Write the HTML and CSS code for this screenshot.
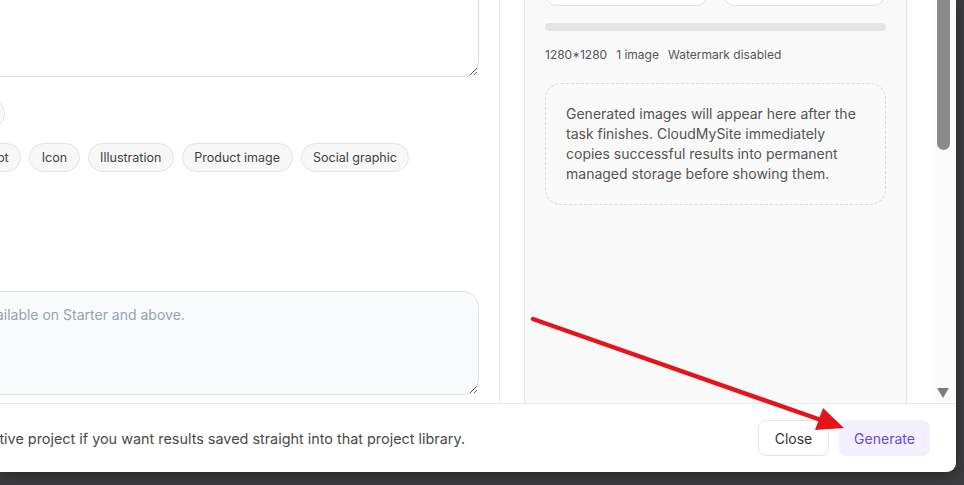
FILE: index.html
```html
<!DOCTYPE html>
<html lang="en">
  <head>
    <meta charset="UTF-8">
    <title>Generate image</title>
    <link rel="stylesheet" href="styles.css">
  </head>
  <body>
    <div class="modal">
      <div class="modal-body">
        <div class="form-col">
          <textarea class="prompt" aria-label="Prompt"></textarea>
          <div class="ratio-row">
            <button class="pill pill-cut">Custom</button>
          </div>
          <div class="chips">
            <button class="chip chip-cut">Concept</button>
            <button class="chip">Icon</button>
            <button class="chip">Illustration</button>
            <button class="chip">Product image</button>
            <button class="chip">Social graphic</button>
          </div>
          <textarea class="negative" placeholder="Negative prompts are available on Starter and above." disabled></textarea>
        </div>
        <div class="preview-col">
          <div class="panel">
            <div class="selects">
              <div class="select-box"></div>
              <div class="select-box"></div>
            </div>
            <div class="progress"></div>
            <div class="meta">
              <span>1280*1280</span>
              <span>1 image</span>
              <span>Watermark disabled</span>
            </div>
            <div class="empty">
              Generated images will appear here after the task finishes. CloudMySite immediately copies successful results into permanent managed storage before showing them.
            </div>
          </div>
        </div>
        <div class="scrollbar">
          <div class="thumb"></div>
          <div class="arrow-down"></div>
        </div>
      </div>
      <div class="modal-footer">
        <p class="hint">Select an active project if you want results saved straight into that project library.</p>
        <div class="actions">
          <button class="btn btn-close">Close</button>
          <button class="btn btn-primary">Generate</button>
        </div>
      </div>
    </div>

    <svg class="annotation" width="964" height="485" viewBox="0 0 964 485">
      <line x1="533" y1="319" x2="821" y2="420" stroke="#e5141b" stroke-width="4.5" stroke-linecap="round"/>
      <polygon points="844,428 815,430 823,408" fill="#e5141b"/>
    </svg>
  </body>
</html>
```

FILE: styles.css
```css
body {
  margin: 0;
  width: 964px;
  height: 485px;
  overflow: hidden;
  background: #3d3d40;
  font-family: Inter, "Liberation Sans", sans-serif;
  position: relative;
}

.modal {
  width: 956px;
  height: 472px;
  background: white;
  border-radius: 0 0 9px 0;
  box-shadow: 0 4px 14px rgba(0, 0, 0, 0.35);
  display: flex;
  flex-direction: column;
  overflow: hidden;
}

.modal-body {
  height: 403px;
  display: flex;
  overflow: hidden;
}

/* left column */
.form-col {
  width: 479px;
  padding-right: 20px;
  border-right: 1px solid #e8e8e8;
  display: flex;
  flex-direction: column;
  align-items: flex-start;
}

textarea {
  font-family: inherit;
  box-sizing: border-box;
  resize: vertical;
  outline: none;
}

.prompt {
  margin: -50px 0 0 -40px;
  width: calc(100% + 40px);
  height: 127px;
  border: 1px solid #dcdcdc;
  border-radius: 15px;
  background: white;
}

.ratio-row {
  margin-top: 21px;
}

.pill {
  height: 31px;
  width: 110px;
  margin-left: -105px;
  border: 1px solid #e2e2e2;
  border-radius: 16px;
  background: #fafafa;
}

.chips {
  margin-top: 14px;
  display: flex;
  gap: 8px;
}

.chip {
  height: 29px;
  padding: 0 11.5px;
  border: 1px solid #e3e3e3;
  border-radius: 15px;
  background: #f7f7f7;
  color: #424242;
  font-family: inherit;
  font-size: 12.5px;
}

.chip-cut {
  margin-left: -54px;
}

.negative {
  margin: 119px 0 0 -193px;
  width: calc(100% + 193px);
  height: 104px;
  padding: 14px 14px 14px 26px;
  border: 1px solid #dde1e6;
  border-radius: 16px;
  background: #f8fafc;
  font-size: 14px;
  line-height: 18px;
}

.negative::placeholder {
  color: #9aa2ae;
}

/* right column */
.preview-col {
  padding: 0 28px 0 24px;
}

.panel {
  display: flow-root;
  box-sizing: border-box;
  width: 383px;
  height: 100%;
  padding: 0 20px;
  background: #f9f9f9;
  border: 1px solid #e6e6e6;
  border-top: none;
  border-bottom: none;
}

.selects {
  display: flex;
  gap: 15px;
  margin-top: -34px;
}

.select-box {
  flex: 1;
  height: 40px;
  background: white;
  border: 1px solid #e2e2e2;
  border-radius: 12px;
  box-sizing: border-box;
}

.progress {
  margin-top: 17px;
  height: 8px;
  border-radius: 4px;
  background: #e5e5e5;
}

.meta {
  margin-top: 16px;
  display: flex;
  gap: 9px;
  font-size: 12px;
  line-height: 16px;
  color: #555;
}

.empty {
  margin-top: 20px;
  padding: 20px;
  border: 1px dashed #dcdcdc;
  border-radius: 16px;
  font-size: 14px;
  line-height: 20px;
  color: #555;
}

/* scrollbar */
.scrollbar {
  width: 21px;
  display: flex;
  flex-direction: column;
  justify-content: space-between;
  background: #fbfbfb;
}

.thumb {
  margin-left: 2px;
  width: 13px;
  height: 150px;
  background: #8b8b8b;
  border-radius: 0 0 7px 7px;
}

.arrow-down {
  margin: 0 0 5px 2px;
  width: 0;
  height: 0;
  border-left: 6.5px solid transparent;
  border-right: 6.5px solid transparent;
  border-top: 10px solid #7d7d7d;
}

/* footer */
.modal-footer {
  flex: 1;
  border-top: 1px solid #e9e9e9;
  display: flex;
  align-items: center;
  padding-right: 26px;
}

.hint {
  flex: 1;
  margin: 0 0 0 -84px;
  font-size: 14.4px;
  color: #4a4a4a;
  white-space: nowrap;
}

.actions {
  display: flex;
  gap: 10px;
}

.btn {
  height: 36px;
  padding: 0;
  font-family: inherit;
  font-size: 14px;
  color: #333;
  background: white;
  border: 1px solid #e3e3e3;
  border-radius: 8px;
}

.btn-close {
  width: 71px;
}

.btn-primary {
  width: 91px;
  color: #6a4bcf;
  background: #f3efff;
  border-color: #f3efff;
}

.annotation {
  position: absolute;
  top: 0;
  left: 0;
  pointer-events: none;
}
```
